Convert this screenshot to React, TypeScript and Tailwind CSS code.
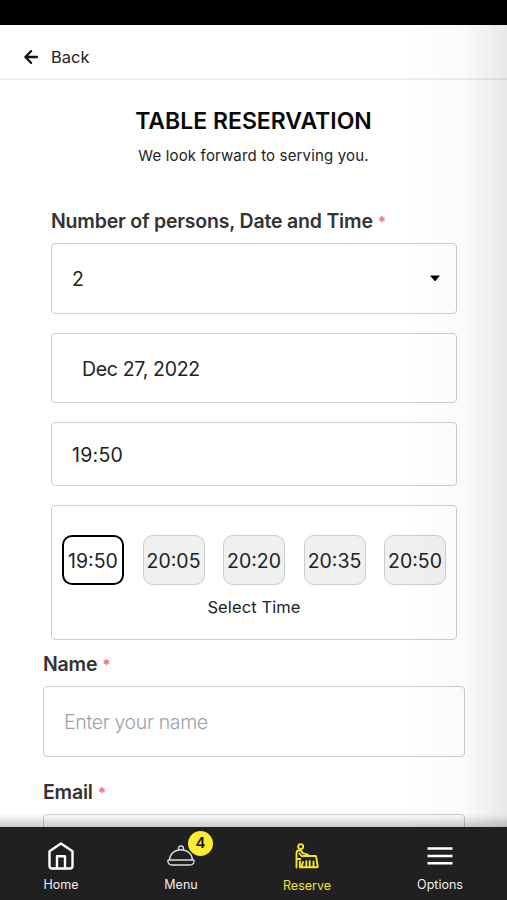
import type { ReactNode } from "react";

const TIME_SLOTS = ["19:50", "20:05", "20:20", "20:35", "20:50"];

function Label({ children }: { children: ReactNode }) {
  return (
    <div className="flex h-6 items-center pt-[2px] text-[19.5px] font-semibold tracking-[-0.2px] text-[#333]">
      {children}
      <span className="ml-[5px] text-[15px] font-bold text-[#f47078]">*</span>
    </div>
  );
}

function BackArrow() {
  return (
    <svg width="15" height="14" viewBox="0 0 15 14" fill="none" stroke="#111" strokeWidth="2.3" strokeLinecap="round" strokeLinejoin="round">
      <path d="M7 1.2 1.4 7 7 12.8M1.6 7H13" />
    </svg>
  );
}

function HomeIcon() {
  return (
    <svg width="26" height="28" viewBox="0 0 26 28" fill="none" stroke="#fff" strokeWidth="2.4" strokeLinejoin="round">
      <path d="M1.5 9.2 13 1.5l11.5 7.7v14.5q0 2.8-2.8 2.8H4.3q-2.8 0-2.8-2.800Z" />
      <path d="M9 26V14.3h8V26" />
    </svg>
  );
}

function MenuIcon() {
  return (
    <svg width="28" height="22" viewBox="0 0 28 22" fill="none" stroke="#ddd" strokeWidth="1.4" strokeLinejoin="round">
      <path d="M2.5 15C3 8.800 7.600 4.800 14 4.800S25 8.800 25.500 15" />
      <path d="M1.800 15h24.400q1 0 1 1-.6 4-4 4H4.800q-3.400 0-4-4 0-1 1-1Z" />
      <path d="M11.600 4.800V3q0-2 2.400-2t2.400 2v1.800" />
    </svg>
  );
}

function ReserveIcon() {
  return (
    <svg width="24" height="26" viewBox="0 0 24 26" fill="none" stroke="#f4e52a" strokeWidth="1.9" strokeLinecap="round" strokeLinejoin="round">
      <circle cx="5.700" cy="3.600" r="2.500" />
      <path d="M1.500 24.500V10.500q0-3.300 2.800-3.300 2.300 0 3.300 3l5.400 1.500M1.500 16h3.700M5 18.500v6M4.500 10.500l2.500 3" />
      <path d="M8 13h12.300q.6 0 .8.700l1.700 9.800q0 .7-.7.700h-3.600v-5.700M18.500 24.200h-2.700M14.700 18v6.200h-3.400v-6M11.300 24.200H6.500L8 19" />
    </svg>
  );
}

export default function App() {
  return (
    <div className="relative flex h-[900px] w-[507px] flex-col overflow-hidden bg-white font-['Inter',sans-serif] text-[#222]">
      <div className="h-[25px] shrink-0 bg-black" />

      <header className="flex h-[55px] shrink-0 items-center gap-[12px] border-b-2 border-[#eee] pt-[11px] pl-6 text-[16.5px]">
        <BackArrow />
        <span>Back</span>
      </header>

      <main className="min-h-0 flex-1 overflow-hidden">
        <div className="flex flex-col items-center pt-[26px]">
          <h1 className="text-[23px] leading-[30px] font-semibold text-[#080808]">TABLE RESERVATION</h1>
          <p className="mt-[9px] text-[15px] leading-[22px] tracking-[0.15px]">We look forward to serving you.</p>
        </div>

        <section className="mt-[42px] ml-[51px] w-[406px]">
          <Label>Number of persons, Date and Time</Label>
          <div className="mt-[10px] flex h-[71px] items-center justify-between rounded-[4px] border border-[#ccc] pr-4 pl-5 text-[19.5px]">
            <span className="pt-[2px]">2</span>
            <svg width="10" height="7" viewBox="0 0 10 7">
              <path d="M1 .5h8q1 0 .4.800L5.600 5.700q-.6.600-1.200 0L.6 1.300Q0 .5 1 .5Z" fill="#000" />
            </svg>
          </div>
          <div className="mt-[19px] flex h-[70px] items-center rounded-[4px] border border-[#ccc] pt-[3px] pl-[30px] text-[19.5px] tracking-[-0.32px]">Dec 27, 2022</div>
          <div className="mt-[19px] flex h-16 items-center rounded-[4px] border border-[#ccc] pt-[3px] pl-5 text-[19.5px] tracking-[0.25px]">19:50</div>
          <div className="mt-[19px] h-[135px] rounded-[4px] border border-[#ccc] px-[10px] pt-[29px]">
            <div className="flex justify-between">
              {TIME_SLOTS.map((time, i) => (
                <button
                  key={time}
                  type="button"
                  className={
                    i === 0
                      ? "flex h-[50px] w-[62px] items-center justify-center rounded-[10px] border-[2.5px] border-black bg-white pt-[3px] text-[19.5px]"
                      : "flex h-[50px] w-[62px] items-center justify-center rounded-[10px] border border-[#ccc] bg-[#f0f0f0] pt-[3px] text-[19.5px]"
                  }
                >
                  {time}
                </button>
              ))}
            </div>
            <p className="mt-[10px] text-center text-[16.5px] leading-6 tracking-[0.1px]">Select Time</p>
          </div>
        </section>

        <section className="mt-[12px] ml-[43px] w-[422px]">
          <Label>Name</Label>
          <div className="mt-[10px] flex h-[71px] items-center rounded-[4px] border border-[#ccc] pt-[3px] pl-5 text-[19.5px] font-light tracking-[-0.35px] text-[#9da1aa]">Enter your name</div>
          <div className="mt-[23px]">
            <Label>Email</Label>
          </div>
          <div className="mt-[10px] h-[71px] rounded-[4px] border border-[#ccc]" />
        </section>
      </main>

      <div className="pointer-events-none absolute top-[25px] right-0 h-[802px] w-[107px] bg-linear-to-r from-transparent via-black/2 via-60% to-black/9" />
      <div className="pointer-events-none absolute bottom-[73px] left-0 h-[13px] w-full bg-linear-to-b from-transparent to-black/20" />

      <nav className="flex h-[73px] shrink-0 bg-[#202020] text-[12.5px] text-[#eee]">
        <div className="flex w-[122px] flex-col items-center pt-[15px]">
          <HomeIcon />
          <span className="mt-[6px] leading-[18px]">Home</span>
        </div>
        <div className="relative flex w-[118px] flex-col items-center pt-[18px]">
          <MenuIcon />
          <span className="mt-[9px] leading-[18px]">Menu</span>
          <span className="absolute top-[4px] left-[66px] flex h-[25px] w-[25px] items-center justify-center rounded-full bg-[#fceb2e] text-[15px] font-semibold text-[#111]">4</span>
        </div>
        <div className="flex w-[134px] flex-col items-center pt-[16px] text-[#f4e52a]">
          <ReserveIcon />
          <span className="mt-[8px] leading-[18px]">Reserve</span>
        </div>
        <div className="flex w-[132px] flex-col items-center pt-[19px]">
          <svg width="26" height="20" viewBox="0 0 26 20" stroke="#fff" strokeWidth="2.4">
            <path d="M.5 2.500h25M.5 10h25M.5 17.200h25" />
          </svg>
          <span className="mt-[10px] leading-[18px]">Options</span>
        </div>
      </nav>
    </div>
  );
}
